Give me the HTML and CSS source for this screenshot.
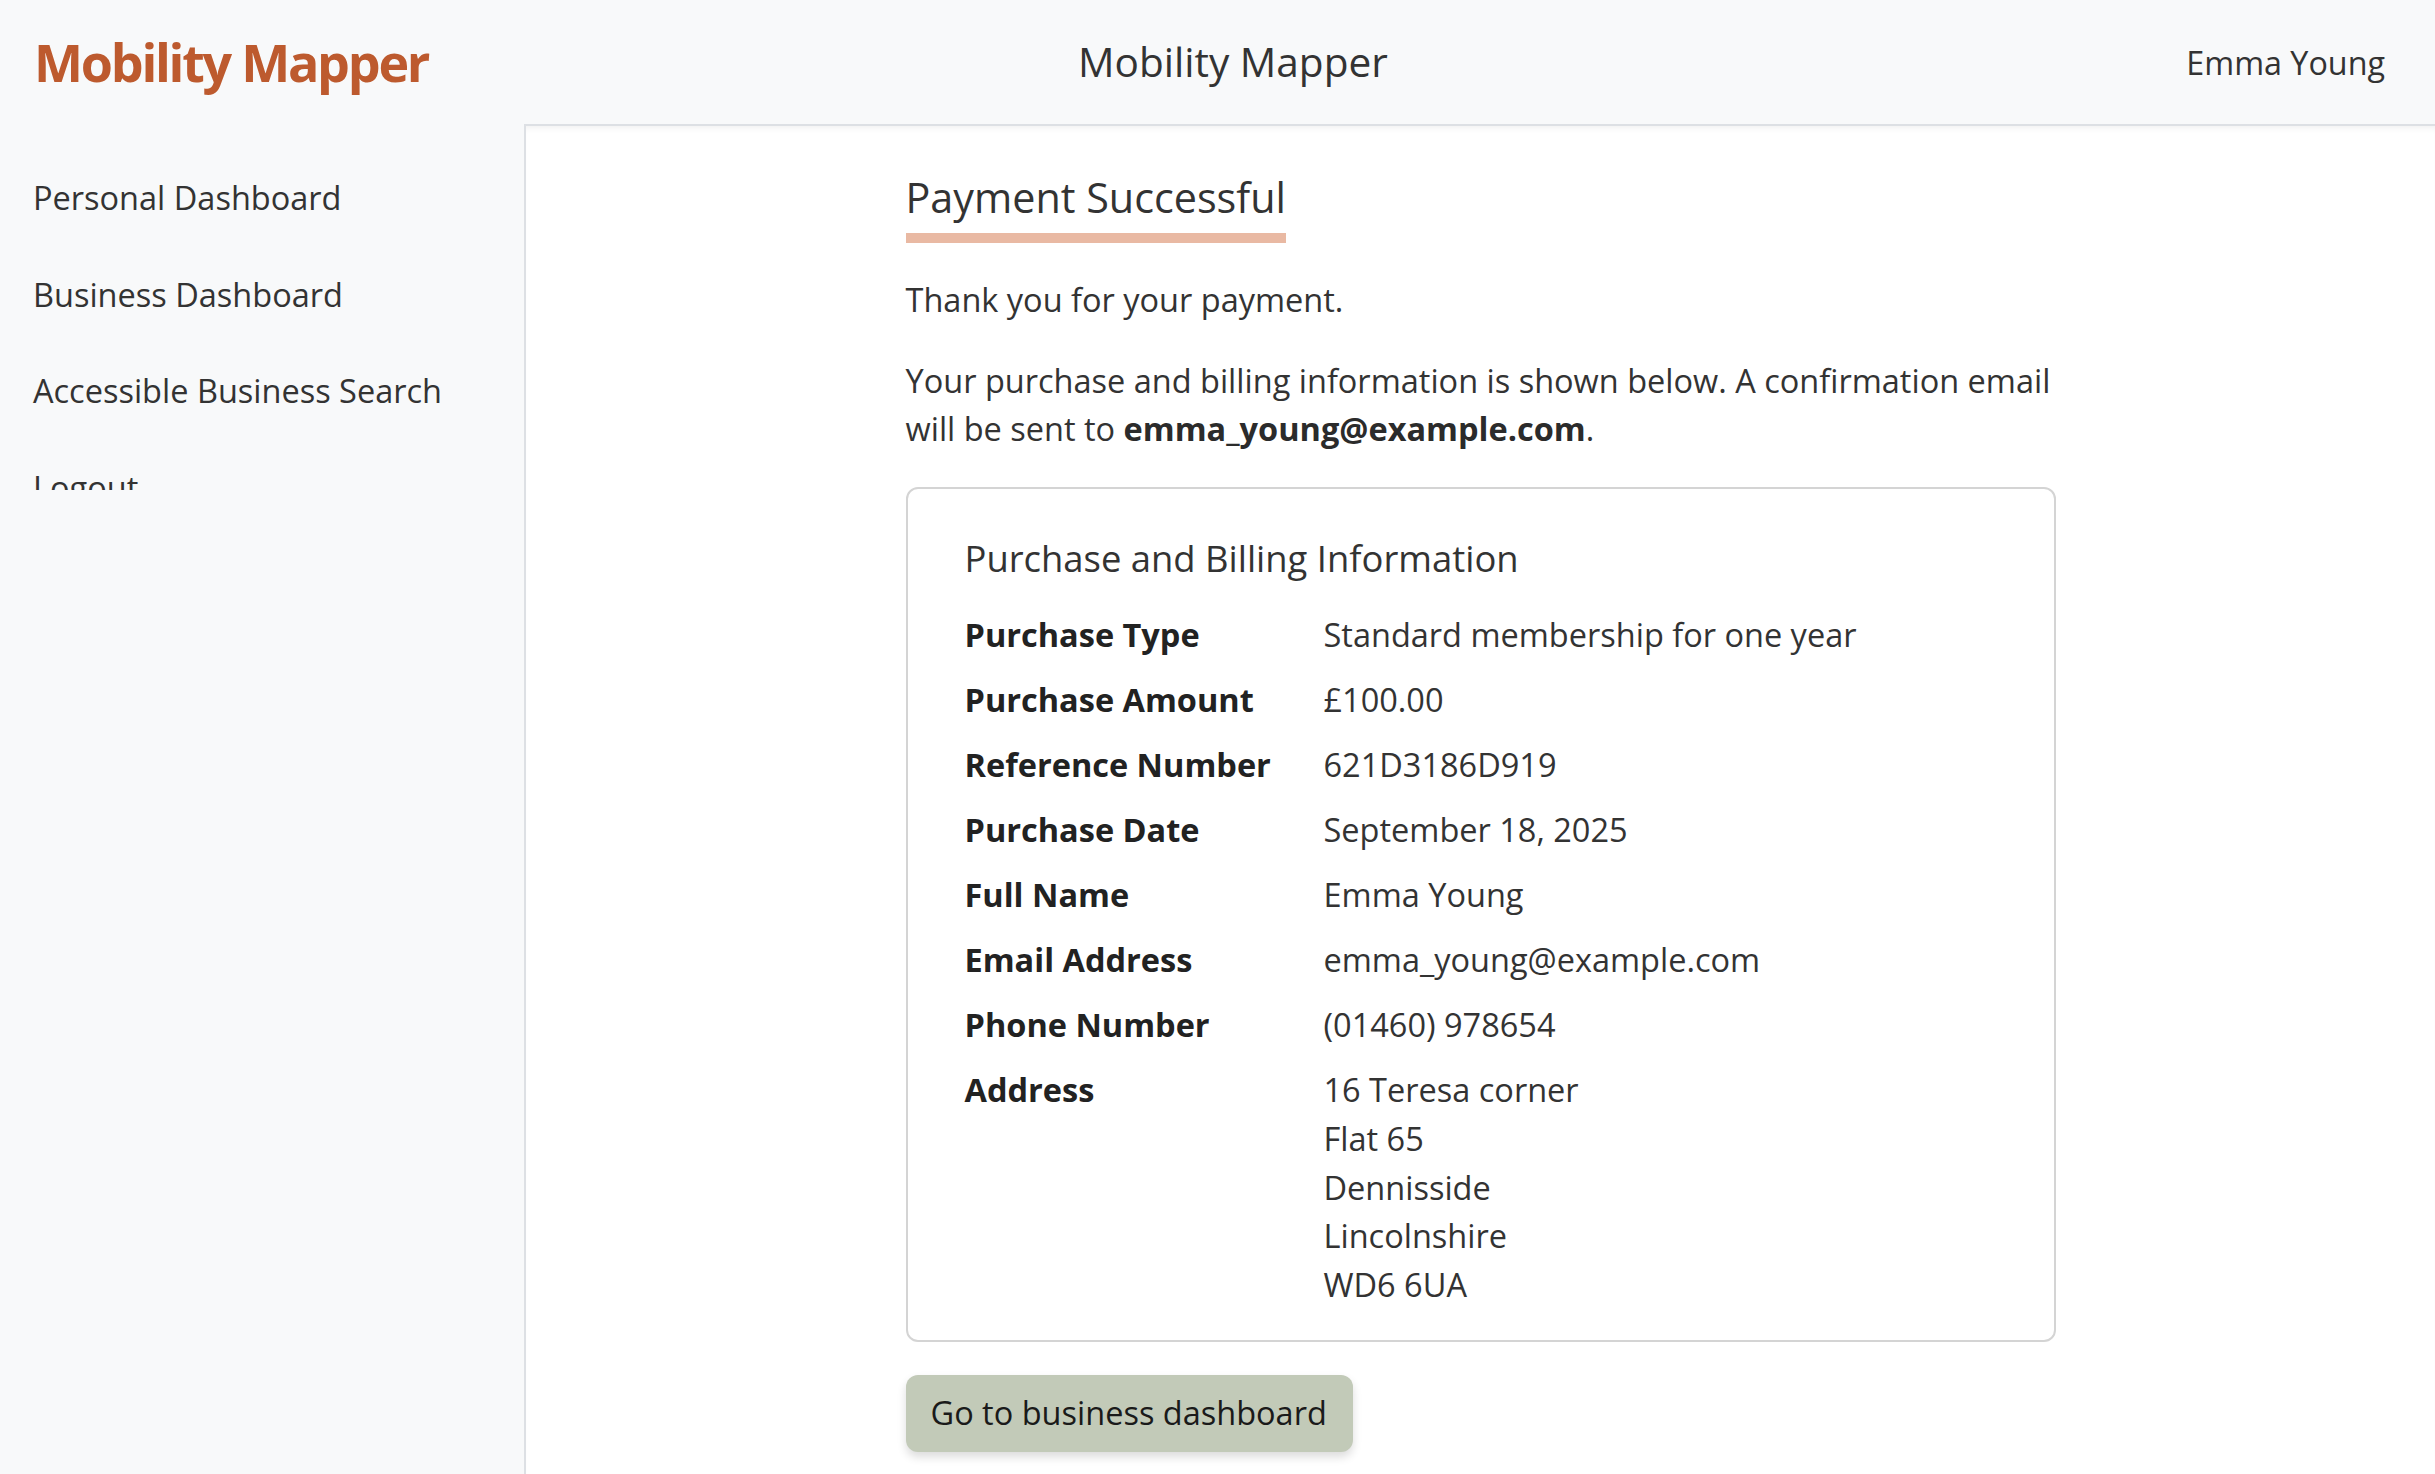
FILE: index.html
```html
<!DOCTYPE html>
<html lang="en">
<head>
<meta charset="utf-8">
<title>Mobility Mapper - Payment Successful</title>
<link rel="stylesheet" href="styles.css">
</head>
<body>
<header class="topbar">
  <div class="brand">Mobility Mapper</div>
  <div class="app-title">Mobility Mapper</div>
  <div class="user-name">Emma Young</div>
</header>
<div class="layout">
  <aside class="sidebar">
    <nav class="side-nav">
      <a class="nav-link" href="#">Personal Dashboard</a>
      <a class="nav-link" href="#">Business Dashboard</a>
      <a class="nav-link" href="#">Accessible Business Search</a>
      <a class="nav-link" href="#">Logout</a>
    </nav>
  </aside>
  <main class="main">
    <div class="content">
      <h1 class="page-title">Payment Successful</h1>
      <p class="text">Thank you for your payment.</p>
      <p class="text">Your purchase and billing information is shown below. A confirmation email will be sent to <strong>emma_young@example.com</strong>.</p>
      <section class="card">
        <h2 class="card-title">Purchase and Billing Information</h2>
        <dl class="info">
          <dt>Purchase Type</dt><dd>Standard membership for one year</dd>
          <dt>Purchase Amount</dt><dd>£100.00</dd>
          <dt>Reference Number</dt><dd>621D3186D919</dd>
          <dt>Purchase Date</dt><dd>September 18, 2025</dd>
          <dt>Full Name</dt><dd>Emma Young</dd>
          <dt>Email Address</dt><dd>emma_young@example.com</dd>
          <dt>Phone Number</dt><dd>(01460) 978654</dd>
          <dt>Address</dt><dd>16 Teresa corner<br>Flat 65<br>Dennisside<br>Lincolnshire<br>WD6 6UA</dd>
        </dl>
      </section>
      <a class="btn" href="#">Go to business dashboard</a>
    </div>
  </main>
</div>
</body>
</html>
```

FILE: styles.css
```css
* { box-sizing: border-box; }

html, body {
  margin: 0;
  padding: 0;
}

body {
  font-family: "Open Sans", "Noto Sans", sans-serif;
  color: #333;
  background: #f8f9fa;
  font-size: 32.5px;
  line-height: 48.75px;
}

.topbar {
  height: 124px;
  display: grid;
  grid-template-columns: 1044px auto 1fr;
  align-items: center;
  padding: 0 50px 0 34px;
  background: #f8f9fa;
}

.brand {
  font-size: 52px;
  font-weight: 700;
  color: #bd5a2e;
  line-height: 1.2;
  letter-spacing: -2.25px;
}

.app-title {
  font-size: 40.6px;
  color: #333;
  line-height: 1.3;
}

.user-name {
  justify-self: end;
  font-size: 32.3px;
  color: #333;
  line-height: 1.3;
}

.layout {
  display: flex;
  min-height: calc(100vh - 124px);
}

.sidebar {
  flex: 0 0 524px;
  background: #f8f9fa;
}

.side-nav {
  display: flex;
  flex-direction: column;
  height: 365.5px;
  overflow: hidden;
  padding-top: 25.5px;
}

.nav-link {
  display: block;
  padding: 24.1px 33px;
  line-height: 48.75px;
  color: #333;
  text-decoration: none;
}

.main {
  flex: 1;
  background: #fff;
  border-top: 2px solid #dde0e4;
  border-left: 2px solid #dde0e4;
  box-shadow: inset 0 6px 6px -4px rgba(0, 0, 0, 0.06);
}

.content {
  width: 1150px;
  margin: 0 auto;
  padding-top: 42.5px;
}

.page-title {
  display: inline-block;
  margin: 0;
  font-size: 41.3px;
  font-weight: 400;
  line-height: 56.25px;
  color: #333;
  padding-bottom: 8.5px;
  border-bottom: 10px solid #e9b9a3;
}

.text {
  margin: 32.3px 0 0;
}

.text strong {
  font-weight: 700;
  color: #2b2b2b;
}

.card {
  margin-top: 33px;
  border: 2px solid #d4d4d4;
  border-radius: 12px;
  padding: 44.5px 57px 29.75px;
}

.card-title {
  margin: 0;
  font-size: 36.4px;
  font-weight: 400;
  line-height: 48px;
  color: #333;
}

.info {
  display: grid;
  grid-template-columns: 359px 1fr;
  row-gap: 16.25px;
  margin: 29.5px 0 0;
}

.info dt {
  font-weight: 700;
  color: #222;
}

.info dd {
  margin: 0;
}

.btn {
  display: inline-block;
  margin-top: 33.5px;
  padding: 14.1px 26px 14.1px 25px;
  background: #c2cab8;
  color: #1a1a1a;
  text-decoration: none;
  border-radius: 12px;
  box-shadow: 0 5px 10px rgba(0, 0, 0, 0.14);
  margin-bottom: 40px;
}
```
